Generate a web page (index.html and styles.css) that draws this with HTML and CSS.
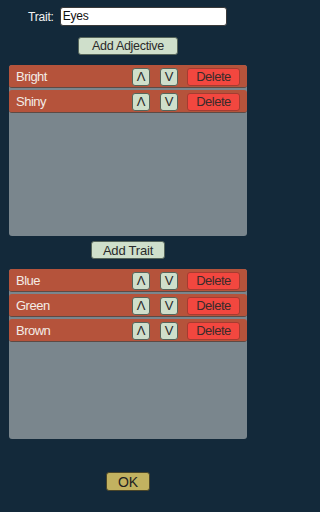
FILE: index.html
```html
<!DOCTYPE html>
<html>
<head>
<meta charset="utf-8">
<link rel="stylesheet" href="styles.css">
</head>
<body>
<div class="screen">
  <div class="trait-row">
    <span class="trait-label">Trait:</span>
    <div class="trait-input">Eyes</div>
  </div>
  <div class="btn green add-adj">Add Adjective</div>
  <div class="panel panel1">
    <div class="row"><span class="name">Bright</span><span class="btn green sq">Λ</span><span class="btn green sq">V</span><span class="btn red del">Delete</span></div>
    <div class="row"><span class="name">Shiny</span><span class="btn green sq">Λ</span><span class="btn green sq">V</span><span class="btn red del">Delete</span></div>
  </div>
  <div class="btn green add-trait">Add Trait</div>
  <div class="panel panel2">
    <div class="row"><span class="name">Blue</span><span class="btn green sq">Λ</span><span class="btn green sq">V</span><span class="btn red del">Delete</span></div>
    <div class="row"><span class="name">Green</span><span class="btn green sq">Λ</span><span class="btn green sq">V</span><span class="btn red del">Delete</span></div>
    <div class="row"><span class="name">Brown</span><span class="btn green sq">Λ</span><span class="btn green sq">V</span><span class="btn red del">Delete</span></div>
  </div>
  <div class="btn ok">OK</div>
</div>
</body>
</html>
```
FILE: styles.css
```css
html, body {
  margin: 0;
  padding: 0;
  background: #13293a;
}
.screen {
  width: 256px;
  height: 512px;
  display: flex;
  flex-direction: column;
  align-items: center;
  font-family: "Liberation Sans", Arial, sans-serif;
  padding-top: 7px;
  box-sizing: border-box;
}
.trait-row {
  display: flex;
  align-items: center;
  gap: 6px;
  height: 19px;
  padding-left: 28px;
  width: 256px;
  box-sizing: border-box;
}
.trait-label {
  color: #f2f2f2;
  font-size: 12px;
  letter-spacing: -0.2px;
}
.trait-input {
  width: 167px;
  height: 19px;
  box-sizing: border-box;
  background: #ffffff;
  border: 1px solid #3a3a3a;
  border-radius: 3px;
  font-size: 12px;
  letter-spacing: -0.2px;
  color: #111;
  padding-left: 2px;
  line-height: 17px;
}
.btn {
  display: flex;
  align-items: center;
  justify-content: center;
  box-sizing: border-box;
  border-radius: 3px;
  color: #2a2a2a;
}
.green {
  background: #cfdfcb;
  border: 1px solid #56655a;
}
.add-adj {
  margin-top: 11px;
  width: 100px;
  height: 18px;
  font-size: 12.5px;
  letter-spacing: -0.3px;
}
.add-trait {
  margin-top: 5px;
  width: 74px;
  height: 18px;
  font-size: 13px;
  letter-spacing: -0.2px;
}
.panel {
  width: 238px;
  background: #7a868d;
  border-radius: 3px;
  display: flex;
  flex-direction: column;
  gap: 2px;
}
.panel1 {
  margin-top: 10px;
  height: 171px;
}
.panel2 {
  margin-top: 10px;
  height: 170px;
}
.row {
  height: 23px;
  background: #b5533b;
  border-radius: 3px;
  border-bottom: 1px solid #5e4a44;
  box-sizing: border-box;
  display: flex;
  align-items: center;
  padding: 0 7px;
}
.name {
  flex: 1;
  color: #f3ece6;
  font-size: 13px;
  letter-spacing: -0.5px;
  padding-top: 1px;
}
.sq {
  width: 18px;
  height: 18px;
  font-size: 13px;
  margin-top: 1px;
}
.name + .sq {
  margin-right: 10px;
}
.sq + .sq {
  margin-right: 9px;
}
.red {
  background: #f2473f;
  border: 1px solid #a53b31;
}
.del {
  width: 53px;
  height: 18px;
  font-size: 13px;
  letter-spacing: -0.5px;
  color: #3a2b2b;
  margin-top: 1px;
}
.ok {
  margin-top: 33px;
  width: 44px;
  height: 19px;
  background: #c2b260;
  border: 1px solid #4a4528;
  font-size: 14px;
  color: #222;
}
```
